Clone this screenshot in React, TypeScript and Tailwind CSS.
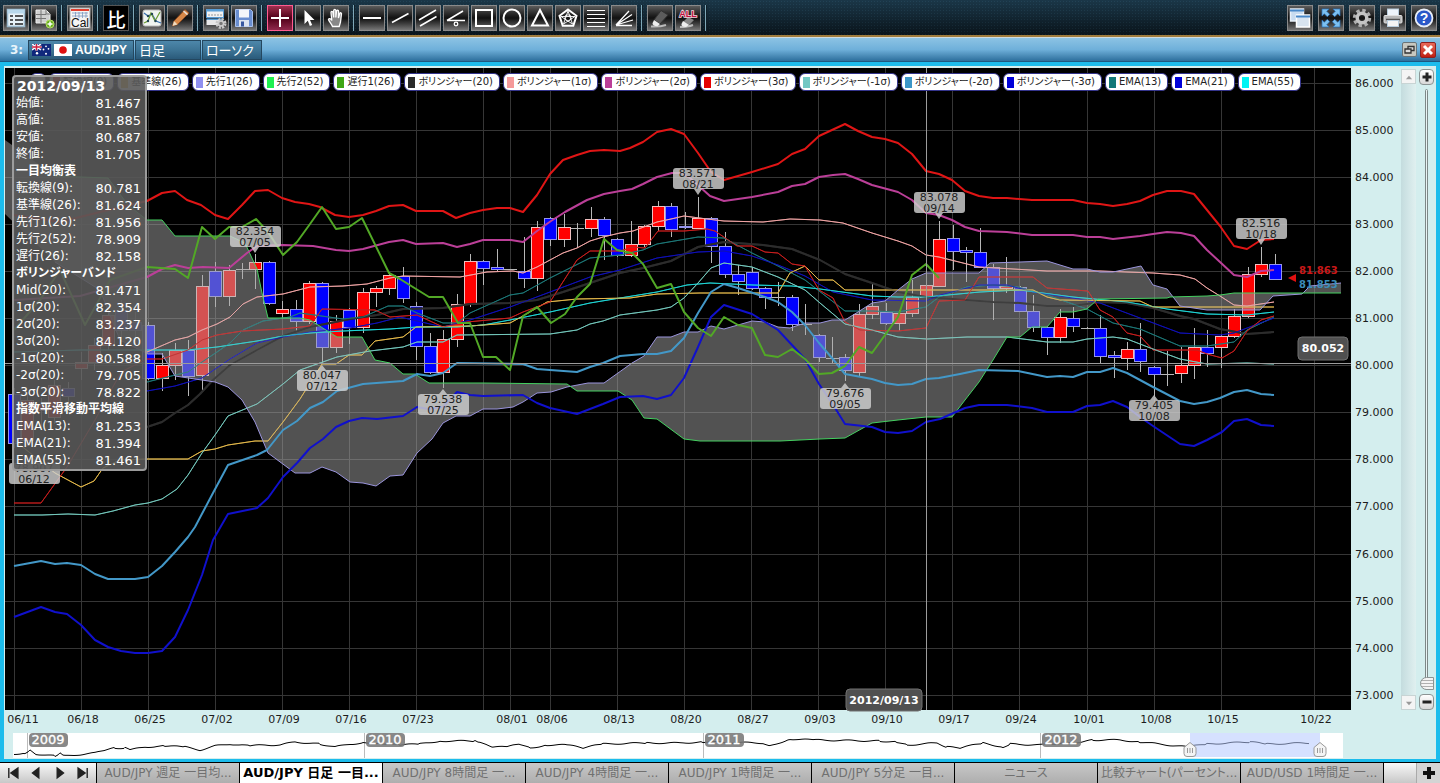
import type { ReactNode } from "react";
import clsx from "clsx";

const SANS = "font-['DejaVu_Sans','Noto_Sans_CJK_JP',sans-serif]";

type Candle = [number, number, number, number, number, "u" | "d" | "n"];

// session, high, body top, body bottom, low, direction
const CANDLES: Candle[] = [
  [0, 388, 394, 443, 448, "d"], [1, 392, 400, 440, 446, "u"], [2, 398, 404, 410, 430, "u"], [3, 380, 385, 417, 424, "u"],
  [4, 382, 388, 396, 402, "d"], [5, 352, 362, 368, 380, "u"], [6, 338, 345, 362, 370, "u"], [7, 308, 315, 345, 350, "u"],
  [8, 300, 310, 330, 342, "d"], [9, 312, 322, 330, 345, "d"], [10, 322, 325, 378, 380, "d"], [11, 353, 365, 378, 391, "u"],
  [12, 343, 350, 365, 380, "u"], [13, 340, 350, 376, 396, "d"], [14, 275, 286, 375, 390, "u"], [15, 262, 271, 296, 307, "d"],
  [16, 265, 270, 296, 306, "u"], [17, 263, 269, 269, 279, "n"], [18, 254, 262, 269, 289, "u"], [19, 261, 262, 303, 305, "d"],
  [20, 301, 309, 313, 319, "u"], [21, 300, 309, 321, 332, "d"], [22, 281, 283, 321, 324, "u"], [23, 282, 283, 347, 364, "d"],
  [24, 315, 321, 347, 353, "u"], [25, 308, 310, 327, 344, "d"], [26, 288, 292, 327, 333, "u"], [27, 286, 288, 292, 307, "u"],
  [28, 272, 275, 288, 295, "u"], [29, 267, 276, 298, 303, "d"], [30, 302, 306, 346, 360, "d"], [31, 333, 346, 372, 374, "d"],
  [32, 330, 339, 372, 388, "u"], [33, 294, 304, 339, 347, "u"], [34, 254, 261, 304, 307, "u"], [35, 260, 261, 268, 285, "d"],
  [36, 249, 267, 269, 272, "d"], [37, 269, 269, 269, 270, "n"], [38, 237, 271, 278, 288, "d"], [39, 221, 227, 278, 291, "u"],
  [40, 217, 218, 239, 246, "d"], [41, 214, 227, 239, 247, "u"], [42, 223, 228, 228, 248, "n"], [43, 207, 219, 228, 237, "u"],
  [44, 217, 219, 235, 260, "d"], [45, 238, 239, 255, 257, "d"], [46, 221, 244, 255, 257, "u"], [47, 225, 226, 244, 247, "u"],
  [48, 201, 206, 226, 231, "u"], [49, 203, 206, 229, 237, "d"], [50, 212, 226, 227, 229, "d"], [51, 197, 218, 228, 229, "u"],
  [52, 217, 218, 246, 263, "d"], [53, 232, 246, 274, 278, "d"], [54, 265, 274, 281, 295, "d"], [55, 267, 272, 288, 290, "d"],
  [56, 287, 288, 297, 309, "d"], [57, 282, 297, 297, 306, "n"], [58, 295, 297, 324, 331, "d"], [59, 304, 324, 324, 335, "n"],
  [60, 334, 335, 357, 362, "d"], [61, 337, 358, 358, 364, "n"], [62, 354, 357, 370, 381, "d"], [63, 304, 314, 372, 376, "u"],
  [64, 283, 306, 314, 319, "u"], [65, 303, 312, 323, 325, "d"], [66, 310, 313, 323, 331, "u"], [67, 280, 297, 313, 317, "u"],
  [68, 270, 285, 297, 315, "u"], [69, 221, 239, 286, 287, "u"], [70, 225, 238, 251, 270, "d"], [71, 247, 250, 252, 282, "d"],
  [72, 228, 252, 267, 268, "d"], [73, 264, 267, 288, 320, "d"], [74, 257, 286, 288, 293, "u"], [75, 286, 287, 311, 312, "d"],
  [76, 295, 311, 327, 332, "d"], [77, 326, 327, 337, 355, "d"], [78, 309, 317, 337, 343, "u"], [79, 307, 318, 326, 332, "d"],
  [80, 327, 328, 328, 329, "n"], [81, 315, 328, 356, 363, "d"], [82, 351, 355, 357, 378, "d"], [83, 342, 349, 358, 370, "u"],
  [84, 323, 349, 361, 372, "d"], [85, 366, 367, 374, 396, "d"], [86, 351, 374, 374, 386, "n"], [87, 347, 365, 373, 383, "u"],
  [88, 328, 347, 365, 379, "u"], [89, 330, 347, 353, 367, "d"], [90, 334, 336, 347, 368, "u"], [91, 309, 316, 336, 338, "u"],
  [92, 267, 274, 316, 318, "u"], [93, 247, 264, 274, 277, "u"], [94, 254, 264, 279, 280, "d"],
];

const SPAN_A =
  "5,214 55,262 100,290 120,340 148,354 162,354 175,376 215,382 228,387 242,400 255,422 268,453 295,473 310,473 322,467 336,472 350,482 363,483 376,486 390,476 403,475 417,453 432,439 443,423 456,416 470,416 483,409 497,409 513,407 523,402 537,393 551,392 567,387 588,383 604,383 618,373 632,363 644,356 657,337 671,337 684,332 698,332 711,326 724,329 752,321 765,322 778,327 790,328 805,323 820,323 832,320 845,320 858,312 872,303 885,301 898,290 912,279 926,273 979,273 990,263 1020,262 1047,261 1073,269 1087,269 1100,272 1113,272 1127,269 1141,266 1153,285 1167,289 1180,306 1207,310 1260,310 1273,296 1302,294 1310,286 1341,283";
const SPAN_B =
  "5,140 55,176 108,178 128,205 147,220 162,220 175,236 230,236 245,243 257,269 262,293 268,318 300,318 310,320 337,337 362,337 375,360 390,363 403,374 415,374 429,383 483,383 567,384 577,391 618,391 632,400 644,418 657,419 684,439 700,441 780,441 820,439 845,438 872,423 898,420 926,417 952,417 965,400 979,382 993,360 1007,337 1020,337 1032,327 1047,327 1060,312 1073,312 1087,309 1098,299 1167,298 1170,297 1207,296 1220,295 1234,293 1341,293";

const LINES: { color: string; width: number; points: string }[] = [
  { color: "#2c2c2c", width: 2, points: "147,427 162,422 175,413 188,405 200,394 213,380 230,365 257,350 283,336 310,327 350,319 377,315 403,309 443,308 470,304 510,303 537,300 563,292 590,283 620,273 643,268 671,261 698,247 724,242 763,245 792,249 820,260 845,274 872,283 898,292 926,297 940,298 993,302 1020,303 1047,306 1073,306 1100,302 1127,303 1153,308 1180,316 1194,319 1220,329 1247,334 1274,332" },
  { color: "#1c7878", width: 1, points: "147,382 167,377 188,372 202,362 217,352 230,343 243,330 263,321 290,317 300,313 343,319 363,317 388,306 403,306 417,313 443,323 457,323 470,313 510,295 523,293 550,278 590,258 620,255 643,250 657,244 698,237 724,238 752,253 778,266 805,280 845,311 872,311 898,312 926,307 939,297 967,287 993,285 1018,287 1047,295 1087,309 1113,323 1140,329 1180,346 1207,346 1234,342 1247,330 1274,317" },
  { color: "#1010b8", width: 1, points: "147,391 175,386 202,378 230,359 257,343 283,337 310,332 350,328 377,323 400,317 443,327 470,320 510,307 550,292 590,277 620,270 657,258 698,252 724,251 752,256 778,265 805,276 833,292 872,300 926,301 940,295 979,285 1007,285 1033,292 1073,298 1100,303 1140,318 1180,333 1220,335 1234,333 1247,328 1274,318" },
  { color: "#1fd6d6", width: 1, points: "14,352 80,350 147,350 188,350 217,347 257,341 283,336 310,333 343,331 390,329 417,327 457,327 483,325 510,320 550,312 590,303 620,298 657,292 687,285 710,283 753,285 792,286 820,289 872,296 898,297 926,297 980,292 1020,290 1073,297 1127,302 1167,309 1207,314 1247,315 1274,312" },
  { color: "#e3b84a", width: 1, points: "14,440 55,473 68,480 81,487 94,481 103,468 120,460 147,459 188,459 202,451 215,449 228,445 255,441 268,441 283,422 300,399 322,364 336,364 349,355 362,355 375,341 403,337 416,327 470,326 510,323 523,316 547,302 577,299 630,298 657,294 700,293 778,293 790,273 805,266 819,280 833,280 845,290 960,290 1033,290 1047,297 1060,300 1140,301 1153,307 1274,307" },
  { color: "#c81e1e", width: 1, points: "14,503 41,503 67,467 95,420 121,372 147,359 162,359 188,350 202,340 217,335 242,331 283,329 310,326 322,309 375,310 390,317 417,315 443,327 467,322 510,318 523,312 550,302 577,260 590,251 620,251 633,247 645,248 658,231 684,231 707,229 715,231 737,246 752,246 765,252 778,253 792,264 805,266 819,290 833,298 845,322 860,330 898,331 926,328 939,301 965,300 979,277 1033,277 1047,288 1088,291 1100,310 1113,317 1127,333 1140,336 1153,350 1197,350 1207,354 1222,358 1234,351 1247,331 1261,320 1274,316" },
  { color: "#f0a4a4", width: 1, points: "147,352 175,340 188,337 202,330 217,324 230,317 243,304 257,297 283,294 310,287 343,286 367,284 390,278 403,276 460,277 487,272 513,271 523,273 537,267 563,253 577,248 590,241 603,237 620,233 633,231 657,222 671,219 684,216 707,219 724,221 763,222 790,219 820,220 843,223 872,233 898,241 912,246 926,255 939,257 979,267 1047,271 1100,271 1153,273 1180,275 1195,279 1207,288 1220,296 1234,305 1247,306 1274,302" },
  { color: "#73c8bc", width: 1, points: "14,515 42,515 68,514 95,515 113,511 135,505 148,503 162,499 177,489 188,475 202,453 215,435 228,416 257,404 283,384 300,370 337,357 370,351 403,347 417,342 443,342 457,335 550,334 577,330 590,324 603,321 620,315 657,310 671,307 684,298 698,283 711,268 724,263 752,267 778,277 805,290 820,303 845,324 872,330 898,337 927,339 967,337 1007,337 1047,342 1073,342 1087,339 1113,337 1127,339 1153,349 1180,359 1207,364 1247,363 1274,364" },
  { color: "#e01515", width: 2, points: "14,215 60,222 100,212 147,201 162,193 175,191 187,200 201,205 215,215 228,219 242,205 255,191 268,190 282,198 295,202 309,204 320,207 335,215 349,217 363,215 376,211 389,206 403,205 416,211 443,211 456,218 470,213 483,210 497,208 510,208 523,212 537,195 550,174 563,160 577,155 590,151 604,150 620,151 630,148 643,142 657,132 671,129 684,134 698,153 711,172 724,180 752,172 778,164 792,154 805,149 819,136 832,130 845,124 858,131 872,137 885,139 898,143 912,154 926,171 939,174 952,180 965,191 979,196 993,198 1007,198 1032,200 1073,200 1087,203 1100,204 1113,206 1127,204 1140,201 1153,195 1167,191 1181,191 1194,194 1207,210 1220,226 1234,246 1247,249 1261,240 1274,239" },
  { color: "#bb3f98", width: 2, points: "14,300 80,296 147,277 162,269 175,265 188,268 203,267 229,268 247,253 257,246 283,245 313,246 336,250 349,251 363,249 389,242 403,240 416,244 443,243 457,247 470,244 483,240 511,240 523,242 537,231 551,221 565,212 587,200 604,194 620,191 632,189 643,184 657,177 672,173 682,173 690,178 710,196 724,201 738,199 752,197 778,192 792,186 805,184 819,177 833,175 845,174 858,179 872,185 898,192 912,200 926,213 939,215 952,220 965,227 979,231 1007,232 1032,235 1073,235 1087,237 1100,237 1113,239 1140,236 1153,234 1167,232 1181,233 1194,236 1207,250 1220,262 1234,275 1247,277 1261,271 1274,270" },
  { color: "#4398c8", width: 2, points: "14,566 41,561 55,564 67,563 81,565 95,574 108,579 135,579 148,577 162,566 175,552 188,537 195,527 213,493 228,465 257,455 267,450 283,430 297,421 310,408 323,402 337,391 363,384 403,381 417,374 430,376 443,373 457,363 523,364 537,369 550,370 577,372 590,367 603,363 620,356 643,354 657,354 671,351 684,338 698,313 711,292 724,284 738,288 765,297 778,302 792,312 805,325 819,343 832,358 845,374 872,379 885,383 898,385 912,384 926,379 939,378 960,374 979,370 1018,371 1047,377 1060,376 1073,377 1087,372 1100,372 1113,368 1127,373 1153,387 1180,401 1194,404 1207,402 1220,398 1234,392 1247,390 1261,394 1274,395" },
  { color: "#1010cc", width: 2, points: "14,617 41,607 55,612 67,614 81,625 95,640 108,647 121,651 135,653 148,653 162,651 175,637 188,610 202,575 213,540 228,514 257,508 268,498 283,477 297,463 310,448 323,439 336,427 349,421 362,418 377,419 403,416 417,407 428,409 443,407 457,392 470,395 483,396 523,395 537,403 550,408 577,414 590,409 603,404 620,397 643,396 657,399 671,395 684,378 698,347 711,317 724,305 752,314 778,330 792,345 805,359 819,384 832,403 845,424 872,427 885,432 898,433 912,431 926,422 940,419 965,408 979,405 1007,405 1032,408 1047,412 1073,412 1087,406 1100,405 1113,401 1127,407 1140,417 1153,426 1180,444 1194,446 1207,440 1222,432 1234,421 1247,419 1261,425 1274,426" },
  { color: "#52a826", width: 2, points: "14,330 40,300 60,270 85,325 110,280 147,267 175,269 188,278 202,227 215,239 229,227 242,227 256,219 268,232 283,255 297,242 310,224 322,207 336,229 349,227 362,218 389,273 400,279 429,297 443,297 458,323 470,323 483,357 496,357 510,370 523,316 537,307 551,323 565,314 577,297 590,284 604,239 617,250 632,253 643,264 657,288 671,284 684,312 698,328 711,336 724,317 738,325 752,328 765,355 778,357 792,349 805,359 819,374 832,373 845,366 859,347 872,353 885,335 898,317 912,275 926,264 939,278" },
];

const PRICES = [86, 85, 84, 83, 82, 81, 80, 79, 78, 77, 76, 75, 74, 73];

const DATES: [string, number, number][] = [
  ["06/11", 14, 23], ["06/18", 81, 83], ["06/25", 148, 150], ["07/02", 215, 217], ["07/09", 282, 284],
  ["07/16", 349, 351], ["07/23", 416, 418], ["08/01", 510, 512], ["08/06", 550, 552], ["08/13", 617, 619],
  ["08/20", 684, 686], ["08/27", 751, 753], ["09/03", 818, 820], ["09/10", 885, 887], ["09/17", 952, 954],
  ["09/24", 1019, 1021], ["10/01", 1087, 1089], ["10/08", 1154, 1156], ["10/15", 1221, 1223], ["10/22", 1314, 1316],
];

// price, date, centre x, box top, pointer side
const CALLOUTS: [string, string, number, number, "up" | "down"][] = [
  ["78.907", "06/12", 34, 463, "up"],
  ["82.354", "07/05", 255, 226, "down"],
  ["80.047", "07/12", 322, 370, "up"],
  ["79.538", "07/25", 443, 394, "up"],
  ["83.571", "08/21", 698, 168, "down"],
  ["79.676", "09/05", 845, 388, "up"],
  ["83.078", "09/14", 939, 192, "down"],
  ["79.405", "10/08", 1154, 400, "up"],
  ["82.516", "10/18", 1261, 218, "down"],
];

const LEGEND: [string, string][] = [
  ["#e01515", "転換線(9)"],
  ["#e3b84a", "基準線(26)"],
  ["#9090f0", "先行1(26)"],
  ["#20f050", "先行2(52)"],
  ["#3fa614", "遅行1(26)"],
  ["#2a2a2a", "ボリンジャー(20)"],
  ["#f59a9a", "ボリンジャー(1σ)"],
  ["#bb3f98", "ボリンジャー(2σ)"],
  ["#e60000", "ボリンジャー(3σ)"],
  ["#73c8c4", "ボリンジャー(-1σ)"],
  ["#3c96c8", "ボリンジャー(-2σ)"],
  ["#0000d8", "ボリンジャー(-3σ)"],
  ["#127878", "EMA(13)"],
  ["#0000d8", "EMA(21)"],
  ["#00f4f4", "EMA(55)"],
];

const READOUT: [string, string?][] = [
  ["始値:", "81.467"], ["高値:", "81.885"], ["安値:", "80.687"], ["終値:", "81.705"],
  ["一目均衡表"],
  ["転換線(9):", "80.781"], ["基準線(26):", "81.624"], ["先行1(26):", "81.956"], ["先行2(52):", "78.909"], ["遅行(26):", "82.158"],
  ["ボリンジャーバンド"],
  ["Mid(20):", "81.471"], ["1σ(20):", "82.354"], ["2σ(20):", "83.237"], ["3σ(20):", "84.120"],
  ["-1σ(20):", "80.588"], ["-2σ(20):", "79.705"], ["-3σ(20):", "78.822"],
  ["指数平滑移動平均線"],
  ["EMA(13):", "81.253"], ["EMA(21):", "81.394"], ["EMA(55):", "81.461"],
];

const TABS = [
  "AUD/JPY 週足 一目均...",
  "AUD/JPY 日足 一目...",
  "AUD/JPY 8時間足 一...",
  "AUD/JPY 4時間足 一...",
  "AUD/JPY 1時間足 一...",
  "AUD/JPY 5分足 一目...",
  "ニュース",
  "比較チャート(パーセント...",
  "AUD/USD 1時間足 一...",
];

const OVERVIEW: [number, number][] = [
  [14, 754], [25, 753], [30, 750], [36, 754], [55, 756], [60, 753], [65, 756], [95, 753], [105, 750], [115, 748], [125, 748],
  [130, 750], [145, 747], [165, 746], [185, 747], [200, 750], [215, 746], [230, 744], [250, 746], [265, 745], [280, 745],
  [295, 742], [320, 744], [335, 747], [350, 744], [363, 743], [380, 743], [400, 745], [420, 744], [440, 741], [475, 741],
  [480, 743], [493, 747], [507, 747], [520, 744], [530, 748], [547, 745], [567, 745], [583, 748], [603, 744], [647, 743],
  [680, 743], [703, 742], [763, 743], [770, 746], [790, 739], [813, 740], [880, 741], [897, 742], [907, 745], [937, 743],
  [947, 747], [960, 748], [983, 743], [1003, 747], [1010, 744], [1040, 745], [1062, 743], [1080, 742], [1093, 740], [1120, 740],
  [1140, 742], [1187, 747], [1207, 744], [1250, 742], [1267, 744], [1310, 743],
];

const YEARS: [string, number][] = [["2009", 27], ["2010", 364], ["2011", 703], ["2012", 1040]];

function priceY(price: number) {
  return Math.round(83 + (86 - price) * 47.05);
}

function candleX(index: number) {
  return Math.floor(14.5 + index * 13.41);
}

// Adds small ticks between the anchor points so that the line looks like closing prices
function overviewPoints() {
  const out: string[] = [];
  for (let i = 0; i < OVERVIEW.length - 1; i++) {
    const [x1, y1] = OVERVIEW[i];
    const [x2, y2] = OVERVIEW[i + 1];
    for (let x = x1; x < x2; x += 3) {
      const y = y1 + ((y2 - y1) * (x - x1)) / (x2 - x1) + Math.sin(x * 2.3) * 0.7;
      out.push(`${x},${y.toFixed(1)}`);
    }
  }
  return out.join(" ");
}

function Icon({ children }: { children: ReactNode }) {
  return (
    <svg viewBox="0 0 24 24" className="w-6 h-6" fill="none" stroke="#fff" strokeWidth="1.6" aria-hidden="true">
      {children}
    </svg>
  );
}

function ToolButton({ label, active, children }: { label: string; active?: boolean; children: ReactNode }) {
  return (
    <button
      type="button"
      aria-label={label}
      className={clsx(
        "w-[26px] h-[26px] shrink-0 flex items-center justify-center border overflow-hidden",
        active
          ? "border-[#ff5c90] bg-linear-to-b from-[#a03050] via-[#500018] to-[#90284c]"
          : "border-[#8a8a8a] bg-linear-to-b from-[#5c5c5c] via-[#111111] to-[#777777]"
      )}
    >
      {children}
    </button>
  );
}

function Separator() {
  return <div className="w-0.5 h-[26px] mx-0.5 bg-[#7fa8b8] border-r border-[#10202a] shrink-0" />;
}

function Toolbar() {
  return (
    <header className="flex items-center justify-between px-[3px] pt-[5px] pb-1 border-b-2 border-[#a07c3c] bg-[#122531] bg-[linear-gradient(#1f4054b0,#060d12b0),radial-gradient(#2a4c5e_1px,#10222d_1px)] [background-size:100%_100%,3px_3px]">
      <div className="flex items-center gap-0.5">
        <ToolButton label="一覧">
          <Icon>
            <rect x="3.5" y="3.5" width="17" height="17" fill="#e8f2f8" stroke="#9ab8cc" />
            <rect x="3.5" y="3.5" width="17" height="4" fill="#b8d8ec" stroke="none" />
            <path d="M6 10h3M6 14h3M6 18h3M11 10h8M11 14h8M11 18h8" stroke="#222" strokeWidth="1.6" />
          </Icon>
        </ToolButton>
        <ToolButton label="追加">
          <Icon>
            <path d="M4 4h10l4 4v9H4z" fill="#d0d0d0" stroke="#eee" strokeWidth="1" />
            <path d="M4 8.500h10M4 12.500h10M9 4v13" stroke="#777" strokeWidth="1" />
            <path d="M14 4v4h4" stroke="#777" strokeWidth="1" />
            <circle cx="18" cy="18" r="4" fill="#6ab020" stroke="#b0dc60" strokeWidth="1" />
            <path d="M15.500 18h5M18 15.500v5" stroke="#fff" strokeWidth="1.500" />
          </Icon>
        </ToolButton>
        <Separator />
        <ToolButton label="カレンダー">
          <Icon>
            <rect x="2" y="2" width="20" height="20" fill="#f4f4f4" stroke="#aaa" strokeWidth="1" />
            <path d="M3 4h18" stroke="#e04030" strokeWidth="2" />
            <path d="M4 7h16M4 10h16M7.500 6v6M11 6v6M14.500 6v6M18 6v6" stroke="#7898c0" strokeWidth=".8" />
            <text x="12" y="21" textAnchor="middle" fontSize="12" fontFamily="Liberation Sans, sans-serif" fill="#111" stroke="#f4f4f4" strokeWidth="1.500" paintOrder="stroke">
              Cal
            </text>
          </Icon>
        </ToolButton>
        <Separator />
        <button
          type="button"
          className="w-[26px] h-[26px] shrink-0 flex items-center justify-center bg-black border border-[#555] text-white text-[19px] leading-none font-medium font-['Noto_Sans_CJK_JP',sans-serif]"
        >
          比
        </button>
        <Separator />
        <ToolButton label="テクニカル">
          <Icon>
            <rect x="3" y="4" width="18" height="16" rx="2" fill="#f0f4f0" stroke="#bbb" strokeWidth="1" />
            <path d="M4 7l4 3 4-2 4 7 5 2" stroke="#3a70b0" strokeWidth="1.200" />
            <path d="M4 17l4-2 3-8 4 8 5-9" stroke="#6a9a30" strokeWidth="1.200" />
            <g fill="#245" stroke="none">
              <circle cx="8" cy="10" r="1.200" />
              <circle cx="12" cy="8" r="1.200" />
              <circle cx="15.500" cy="15" r="1.200" />
              <circle cx="8" cy="15" r="1.200" />
            </g>
          </Icon>
        </ToolButton>
        <ToolButton label="描画">
          <Icon>
            <path d="M4.500 20l1.500-5L17 3.500 21 7 9.500 18.500z" fill="#d88848" stroke="#8a4a20" strokeWidth="1" />
            <path d="M4.500 20l1.500-5 3.500 3.500z" fill="#f0dcc0" stroke="none" />
            <path d="M15.500 5L19.500 8.600" stroke="#e8e0d8" strokeWidth="1.500" />
          </Icon>
        </ToolButton>
        <Separator />
        <ToolButton label="画面設定">
          <Icon>
            <rect x="2.500" y="3.500" width="17" height="8" fill="#f2f2f2" stroke="#5a9ad0" strokeWidth="1" />
            <path d="M2.500 4.500h17M2.500 13.500h17" stroke="#5aa0d8" strokeWidth="2" />
            <rect x="2.500" y="14" width="13" height="5" fill="#e8e8e8" stroke="none" />
            <path d="M4 9h14" stroke="#999" strokeDasharray="2 1" strokeWidth="1" />
            <circle cx="17" cy="17.500" r="4" stroke="#c8c8c8" strokeWidth="3" strokeDasharray="2 1.150" />
            <circle cx="17" cy="17.500" r="2.500" fill="#777" stroke="#ccc" strokeWidth="1.500" />
          </Icon>
        </ToolButton>
        <ToolButton label="保存">
          <Icon>
            <path d="M3.500 3.500h15l2 2v15h-17z" fill="#6a8ed0" stroke="#a8c0ec" strokeWidth="1" />
            <rect x="7" y="3.500" width="10" height="8" fill="#f4f6fa" stroke="none" />
            <rect x="7" y="14" width="10" height="6.500" fill="#dde4f0" stroke="none" />
            <rect x="9" y="15.500" width="3" height="5" fill="#3858a0" stroke="none" />
          </Icon>
        </ToolButton>
        <Separator />
        <ToolButton label="十字カーソル" active>
          <Icon>
            <path d="M12 3v18M3 12h18" strokeWidth="2" />
          </Icon>
        </ToolButton>
        <ToolButton label="選択">
          <Icon>
            <path d="M8.500 4v14l3.300-3.200 2 5.200 2.400-1-2.200-5h4.500z" fill="#fff" stroke="none" />
          </Icon>
        </ToolButton>
        <ToolButton label="移動">
          <Icon>
            <path d="M8.500 20.500c-1-2.500-3.500-5-4-7 .5-1.500 2-1 3.300 1L7 6.500c0-1.500 1.600-1.500 2 0l.7 5V4.500c.2-1.500 1.900-1.500 2.100 0v7l.8-6.500c.3-1.400 1.900-1.200 2 .2l-.2 6.800 1.400-4.500c.5-1.200 1.900-.8 1.700.5-.5 3-.5 5-1 8l-1.300 4.500z" fill="#888" strokeWidth="1.300" />
          </Icon>
        </ToolButton>
        <Separator />
        <ToolButton label="水平線">
          <Icon><path d="M3 12h18" strokeWidth="2" /></Icon>
        </ToolButton>
        <ToolButton label="トレンドライン">
          <Icon><path d="M4 16.500L20.500 7.500" /></Icon>
        </ToolButton>
        <ToolButton label="平行線">
          <Icon><path d="M3 14L20 4M4 20l16.500-9.500" /></Icon>
        </ToolButton>
        <ToolButton label="角度線">
          <Icon>
            <path d="M3 14.500L19 5M3 14.500h18" />
            <circle cx="12" cy="18" r="1.800" strokeWidth="1.300" />
          </Icon>
        </ToolButton>
        <ToolButton label="四角形">
          <Icon><rect x="4" y="4" width="16" height="16" strokeWidth="2" /></Icon>
        </ToolButton>
        <ToolButton label="円">
          <Icon><circle cx="12" cy="12" r="8.500" strokeWidth="2" /></Icon>
        </ToolButton>
        <ToolButton label="三角形">
          <Icon><path d="M12 4l8 15.500H4z" strokeWidth="2" /></Icon>
        </ToolButton>
        <ToolButton label="五角形">
          <Icon>
            <path d="M12 3.500l8.500 6.300-3.200 10H6.700l-3.200-10z" strokeWidth="2" />
            <path d="M12 5l4.500 13L5 10.500h14L7.500 18z" strokeWidth=".9" />
            <path d="M12 15.500l-3.400-2.500 1.300-4h4.200l1.300 4z" strokeWidth=".9" />
          </Icon>
        </ToolButton>
        <ToolButton label="リトレースメント">
          <Icon><path d="M3 4.500h18M3 8.500h18M3 12.500h18M3 16.500h18M3 20.500h18" strokeWidth="1.200" /></Icon>
        </ToolButton>
        <ToolButton label="ファン">
          <Icon><path d="M4 19L17 5M4 19L20 8.500M4 19l17-5M4 19.500h16" strokeWidth="1.300" /></Icon>
        </ToolButton>
        <Separator />
        <ToolButton label="消去">
          <Icon>
            <path d="M3 20.500q9 .5 15-1.500" stroke="#bbb" strokeWidth="2" />
            <path d="M6 14l7-9.500 7 4.500-8 9z" fill="#5c5c5c" stroke="#333" strokeWidth="1" />
            <path d="M6 14l6 4-2.500 2.300q-5 0-5-3z" fill="#eee" stroke="none" />
          </Icon>
        </ToolButton>
        <ToolButton label="すべて消去">
          <Icon>
            <path d="M4 21q8 0 13-2" stroke="#bbb" strokeWidth="2" />
            <path d="M7 16l5-5 6 3-6 6z" fill="#888" stroke="none" />
            <path d="M7 15l6 4-3 2q-5 0-4.500-3z" fill="#eee" stroke="none" />
            <text x="12" y="11" textAnchor="middle" fontSize="9" fontWeight="bold" fontFamily="Liberation Sans, sans-serif" fill="#c01040" stroke="#f4d8e0" strokeWidth="1.500" paintOrder="stroke">
              ALL
            </text>
          </Icon>
        </ToolButton>
        <Separator />
      </div>
      <div className="flex items-center gap-[5px]">
        <ToolButton label="ウィンドウ整列">
          <Icon>
            <rect x="2.500" y="3" width="13" height="12" fill="#c8dcf0" stroke="#e8f0f8" strokeWidth="1.500" />
            <path d="M2 4.500h14" stroke="#4888c8" strokeWidth="2" />
            <rect x="8.500" y="9" width="13" height="12" fill="#d8e4f0" stroke="#fff" strokeWidth="1.500" />
            <path d="M8 10.500h14" stroke="#4888c8" strokeWidth="2" />
          </Icon>
        </ToolButton>
        <ToolButton label="全画面">
          <Icon>
            <g fill="#7cc0f0" stroke="#2a70b8" strokeWidth=".7">
              <path d="M3 3h7l-2.300 2.300 3 3-2.400 2.400-3-3L3 10z" />
              <path d="M21 3h-7l2.300 2.300-3 3 2.400 2.400 3-3L21 10z" />
              <path d="M3 21h7l-2.300-2.300 3-3-2.400-2.400-3 3L3 14z" />
              <path d="M21 21h-7l2.300-2.300-3-3 2.400-2.400 3 3L21 14z" />
            </g>
          </Icon>
        </ToolButton>
        <ToolButton label="設定">
          <Icon>
            <circle cx="12" cy="12" r="7.700" stroke="#b0b0b0" strokeWidth="3" strokeDasharray="3.400 2.650" />
            <circle cx="12" cy="12" r="4.800" stroke="#c4c4c4" strokeWidth="3.500" />
          </Icon>
        </ToolButton>
        <ToolButton label="印刷">
          <Icon>
            <rect x="6.500" y="3" width="11" height="7" fill="#eef4fa" stroke="#b8ccdc" strokeWidth="1" />
            <rect x="3" y="9.500" width="18" height="7.500" rx="1" fill="#b8b8b8" stroke="#e0e0e0" strokeWidth="1" />
            <path d="M5 13.500h14" stroke="#555" strokeWidth="1.500" />
            <rect x="6.500" y="14.500" width="11" height="6" fill="#f4f4f4" stroke="#b8ccdc" strokeWidth="1" />
          </Icon>
        </ToolButton>
        <ToolButton label="ヘルプ">
          <Icon>
            <circle cx="12" cy="12" r="8.500" fill="#2a58c8" stroke="#e8eef8" strokeWidth="1.800" />
            <text x="12" y="17" textAnchor="middle" fontSize="14" fontWeight="bold" fontFamily="Liberation Sans, sans-serif" fill="#fff" stroke="none">
              ?
            </text>
          </Icon>
        </ToolButton>
      </div>
    </header>
  );
}

function TitleBar() {
  const box =
    "h-5 px-[3px] flex items-center border border-[#24475f] bg-linear-to-b from-[#4d87aa] via-[#3d7495] to-[#2a5a7a] text-white text-[13px] leading-none";
  return (
    <div className="h-[25px] flex items-center justify-between pl-2.5 pr-1 border-t border-[#cfdbe0] border-b border-b-[#1d5880] bg-linear-to-b from-[#8cc3e4] via-[#6fb0da] to-[#2c6f9c]">
      <div className="flex items-center">
        <span className={clsx("w-[18px] text-[12px] font-bold text-[#e8f4fa]", SANS)}>3:</span>
        <button type="button" className={clsx(box, "w-[106px] gap-[3px]")}>
          <svg viewBox="0 0 19 12" className="w-[19px] h-3 shrink-0" aria-hidden="true">
            <rect width="19" height="12" fill="#10287c" />
            <path d="M0 0l9 6M9 0L0 6" stroke="#fff" strokeWidth="1.500" />
            <path d="M4.500 0v6.500M0 3h9.500" stroke="#fff" strokeWidth="2.600" />
            <path d="M4.500 0v6.500M0 3h9.500" stroke="#d02040" strokeWidth="1.400" />
            <g fill="#fff">
              <circle cx="5" cy="9.300" r="1.200" />
              <circle cx="14" cy="2.300" r=".9" />
              <circle cx="11.500" cy="5.500" r=".9" />
              <circle cx="16.500" cy="4.800" r=".9" />
              <circle cx="14" cy="9.800" r="1" />
            </g>
          </svg>
          <svg viewBox="0 0 18 12" className="w-[18px] h-3 shrink-0" aria-hidden="true">
            <rect width="18" height="12" fill="#fff" />
            <circle cx="9" cy="6" r="3.800" fill="#e01010" />
          </svg>
          <span className="font-bold text-[12px] font-['Liberation_Sans',sans-serif]">AUD/JPY</span>
        </button>
        <button type="button" className={clsx(box, "w-[66px] ml-px font-['Noto_Sans_CJK_JP',sans-serif]")}>日足</button>
        <button type="button" className={clsx(box, "w-[60px] ml-px font-['Noto_Sans_CJK_JP',sans-serif] [font-feature-settings:'palt']")}>ローソク</button>
      </div>
      <div className="flex items-center gap-[3px]">
        <button type="button" aria-label="元に戻す" className="w-[15px] h-[15px] border border-[#6a7478] rounded-xs bg-[#c8c8c0]">
          <svg viewBox="0 0 13 13" fill="#ddd" stroke="#333" strokeWidth="1.300" aria-hidden="true">
            <path d="M5 3.500h6v4H5z" />
            <path d="M2 6h6v4H2z" />
          </svg>
        </button>
        <button type="button" aria-label="閉じる" className="w-4 h-4 border border-[#8c2020] rounded-xs bg-linear-to-b from-[#e86858] to-[#c01c10]">
          <svg viewBox="0 0 14 14" stroke="#fff" strokeWidth="3" aria-hidden="true">
            <path d="M3 3l8 8M11 3l-8 8" />
          </svg>
        </button>
      </div>
    </div>
  );
}

function Callout({ price, date, x, y, side }: { price: string; date: string; x: number; y: number; side: "up" | "down" }) {
  const pointer = side === "down" ? `${x - 4},${y + 21} ${x + 4},${y + 21} ${x},${y + 27}` : `${x - 4},${y} ${x + 4},${y} ${x},${y - 5}`;
  return (
    <g>
      <g fill="#d0d0d0" opacity=".82">
        <rect x={x - 25} y={y} width="51" height="21" rx="3" />
        <polygon points={pointer} />
      </g>
      <g fontSize="11" fill="#222" textAnchor="middle">
        <text x={x} y={y + 9}>{price}</text>
        <text x={x} y={y + 20}>{date}</text>
      </g>
    </g>
  );
}

function PriceChart() {
  const reversedB = SPAN_B.split(" ").reverse().join(" ");
  return (
    <svg viewBox="5 68 1396 665" className="block w-full h-auto" fontFamily="DejaVu Sans, sans-serif" role="img" aria-label="AUD/JPY 日足">
      <defs>
        <clipPath id="plot">
          <rect x="5" y="68" width="1346" height="642" />
        </clipPath>
      </defs>
      <rect x="5" y="68" width="1346" height="642" fill="#000" />

      <g fill="#363636">
        {PRICES.map((p) => (
          <rect key={p} x="5" y={priceY(p)} width="1346" height="1" />
        ))}
        {DATES.map(([label, x]) => (
          <rect key={label} x={x} y="68" width="1" height="642" />
        ))}
        <rect x="483" y="68" width="1" height="642" />
      </g>

      <g shapeRendering="crispEdges">
        {CANDLES.map(([i, high, top, bottom, low, dir]) => {
          const x = candleX(i);
          return (
            <g key={i}>
              <rect x={x} y={high} width="1" height={low - high} fill="#b8b8b8" />
              {dir === "n" ? (
                <rect x={x - 6} y={top} width="13" height="1" fill="#b8b8b8" />
              ) : (
                <>
                  <rect x={x - 6} y={top} width="13" height={Math.max(bottom - top + 1, 2)} fill={dir === "u" ? "#f0c0c0" : "#9494ec"} />
                  <rect x={x - 5} y={top + 1} width="11" height={Math.max(bottom - top - 1, 0)} fill={dir === "u" ? "#ff0000" : "#0000ff"} />
                </>
              )}
            </g>
          );
        })}
      </g>

      <g clipPath="url(#plot)" fill="none" strokeLinejoin="round">
        {LINES.slice(0, 8).map((line) => (
          <polyline key={line.color} points={line.points} stroke={line.color} strokeWidth={line.width} />
        ))}
        <polygon points={`${SPAN_A} ${reversedB}`} fill="#a8a8a8" fillOpacity=".49" fillRule="evenodd" />
        {LINES.slice(0, 8).map((line) => (
          <polyline key={line.color} points={line.points} stroke={line.color} strokeWidth={line.width} strokeOpacity=".7" />
        ))}
        <polyline points={SPAN_A.split(" ").slice(1).join(" ")} stroke="#9a94dc" strokeWidth="1" />
        <polyline points={SPAN_B.split(" ").slice(1).join(" ")} stroke="#44d060" strokeWidth="1" />
        {LINES.slice(8).map((line) => (
          <polyline key={line.color} points={line.points} stroke={line.color} strokeWidth={line.width} />
        ))}
      </g>

      {CALLOUTS.map(([price, date, x, y, side]) => (
        <Callout key={date} price={price} date={date} x={x} y={y} side={side} />
      ))}

      {/* Crosshair */}
      <rect x="5" y="363" width="1346" height="1" fill="#9c9c9c" />
      <rect x="926" y="68" width="1" height="642" fill="#9c9c9c" />
      <rect x="1298" y="337" width="50" height="23" rx="4" fill="#505050" stroke="#707070" />
      <rect x="846" y="689" width="76" height="22" rx="4" fill="#505050" stroke="#707070" />
      <g fontSize="11" fontWeight="bold" fill="#fff" textAnchor="middle">
        <text x="1323" y="352">80.052</text>
        <text x="884" y="704">2012/09/13</text>
      </g>

      {/* Ask and bid */}
      <polygon points="1288,278 1296,274 1296,282" fill="#e01010" />
      <g fontSize="10" fontWeight="bold">
        <text x="1299" y="288" fill="#3c8cb8">81.853</text>
        <text x="1299" y="274" fill="#c81818">81.863</text>
      </g>

      <g fontSize="11" fill="#1c1c1c">
        {PRICES.map((p) => (
          <text key={p} x="1355" y={priceY(p) + 4}>{`${p}.000`}</text>
        ))}
        {DATES.map(([label, , x]) => (
          <text key={label} x={x} y="723" textAnchor="middle">{label}</text>
        ))}
      </g>
    </svg>
  );
}

function Legend() {
  return (
    <div className={clsx("absolute top-[5px] left-[25px] flex gap-[3px] text-[10px] leading-none text-[#222] whitespace-nowrap [font-feature-settings:'palt']", SANS)}>
      <span className="w-4 h-[18px] rounded-md border border-[#34348c] bg-white" />
      {LEGEND.map(([color, label]) => (
        <span key={label} className="h-[18px] pl-[3px] pr-1.5 flex items-center gap-[3px] rounded-md border border-[#34348c] bg-white">
          <i className="w-[7px] h-[11px]" style={{ backgroundColor: color }} />
          {label}
        </span>
      ))}
    </div>
  );
}

function Readout() {
  return (
    <table className={clsx("absolute top-[7px] left-[7px] w-[135px] border-2 border-[#a8a8a8]/85 border-separate border-spacing-0 rounded bg-[#595959]/90 text-white text-[12px] [font-feature-settings:'palt']", SANS)}>
      <tbody>
        <tr className="h-[18px]">
          <th colSpan={2} className="p-0 pl-[3px] text-left text-[14px] leading-[18px] font-bold">2012/09/13</th>
        </tr>
        {READOUT.map(([label, value]) => (
          <tr key={label} className="h-[17px] leading-[17px] whitespace-nowrap">
            {value ? (
              <>
                <th className="p-0 pl-0.5 text-left font-normal">{label}</th>
                <td className="p-0 pr-1 text-right text-[13px]">{value}</td>
              </>
            ) : (
              <th colSpan={2} className="p-0 pl-0.5 text-left font-bold">{label}</th>
            )}
          </tr>
        ))}
      </tbody>
    </table>
  );
}

function ZoomRail() {
  const button = "w-[15px] h-4 flex items-center justify-center rounded-sm border border-[#8c9494] bg-linear-to-b from-white to-[#d8d8d8]";
  const arrow = "w-[15px] h-[15px] flex items-center justify-center border border-[#c8d4d4] bg-[#f4f4f4]";
  return (
    <div className="w-[34px] shrink-0 flex gap-[3px] pb-[23px] pt-px">
      <div className="flex flex-col w-[15px] bg-linear-to-r from-[#c4dcde] to-[#e0f0f0]">
        <button type="button" aria-label="上へ" className={arrow}>
          <svg viewBox="0 0 9 9" className="w-2 h-2" aria-hidden="true"><path d="M1 7l3.500-4L8 7z" fill="#999" /></svg>
        </button>
        <div className="flex-1" />
        <button type="button" aria-label="下へ" className={arrow}>
          <svg viewBox="0 0 9 9" className="w-2 h-2" aria-hidden="true"><path d="M1 3l3.500 4L8 3z" fill="#999" /></svg>
        </button>
      </div>
      <div className="flex flex-col items-center gap-1 w-[15px]">
        <button type="button" aria-label="拡大" className={button}>
          <svg viewBox="0 0 10 10" className="w-2.5 h-2.5" stroke="#222" strokeWidth="3" aria-hidden="true"><path d="M5 .5v9M.5 5h9" /></svg>
        </button>
        <div className="relative flex-1 w-[15px] flex justify-center">
          <div className="w-[3px] h-full border border-[#7c8888] rounded-full bg-[#e8f4f4]" />
          <input
            type="range"
            aria-label="縮尺"
            defaultValue={100}
            className="absolute inset-0 w-[15px] h-full appearance-none bg-transparent [writing-mode:vertical-lr] [&::-webkit-slider-thumb]:appearance-none [&::-webkit-slider-thumb]:w-[14px] [&::-webkit-slider-thumb]:h-[13px] [&::-webkit-slider-thumb]:rounded-l-full [&::-webkit-slider-thumb]:rounded-r-sm [&::-webkit-slider-thumb]:border [&::-webkit-slider-thumb]:border-[#8c9494] [&::-webkit-slider-thumb]:bg-[repeating-linear-gradient(0deg,#f4f4f4_0px,#f4f4f4_2px,#b0b0b0_2px,#b0b0b0_3px)]"
          />
        </div>
        <button type="button" aria-label="縮小" className={button}>
          <svg viewBox="0 0 10 10" className="w-2.5 h-2.5" stroke="#222" strokeWidth="3" aria-hidden="true"><path d="M.5 5h9" /></svg>
        </button>
      </div>
    </div>
  );
}

function Overview() {
  return (
    <div className="pl-2 pr-[92px]">
      <svg viewBox="13 733 1330 25" className="block w-full h-auto bg-white" fontFamily="DejaVu Sans, sans-serif" role="img" aria-label="表示期間">
        {YEARS.map(([year, x]) => (
          <rect key={year} x={x} y="733" width="1" height="25" fill="#bbb" />
        ))}
        <polyline points={overviewPoints()} fill="none" stroke="#000" strokeWidth="1" />
        <rect x="1190" y="733" width="130" height="24" fill="#b4c8ff" fillOpacity=".55" />
        {YEARS.map(([year, x]) => (
          <g key={year}>
            <rect x={x + 2} y="733" width="39" height="14" rx="4" fill="#777" fillOpacity=".88" />
            <text x={x + 21} y="744" textAnchor="middle" fontSize="13" fill="#fff" stroke="#fff" strokeWidth=".3">{year}</text>
          </g>
        ))}
        {[1190, 1320].map((x) => (
          <g key={x} stroke="#999" strokeWidth="1">
            <path d={`M${x} 742.500l6 5v6q0 3-3 3h-6q-3 0-3-3v-6z`} fill="#f4f4f4" />
            <path d={`M${x - 2.5} 748v5M${x} 748v5M${x + 2.5} 748v5`} />
          </g>
        ))}
      </svg>
    </div>
  );
}

function TabBar() {
  const nav = [
    ["最初", "M4 3v14M17 3L7 10l10 7z"],
    ["前へ", "M14 3L5 10l9 7z"],
    ["次へ", "M6 3l9 7-9 7z"],
    ["最後", "M16 3v14M3 3l10 7-10 7z"],
  ];
  return (
    <nav className={clsx("h-[21px] flex border-t border-black bg-linear-to-b from-[#f8f8f8] to-[#c8c8c8] text-[12px] overflow-hidden", SANS)}>
      <div className="w-24 shrink-0 flex items-center justify-between pl-1.5 pr-1.5">
        {nav.map(([label, d]) => (
          <button key={label} type="button" aria-label={label} className="w-3.5 h-3.5">
            <svg viewBox="0 0 20 20" fill="#222" stroke="#222" strokeWidth="2" aria-hidden="true"><path d={d} /></svg>
          </button>
        ))}
      </div>
      {TABS.map((tab, i) => (
        <button
          key={tab}
          type="button"
          className={clsx(
            "w-[143px] min-w-0 px-[3px] whitespace-nowrap overflow-hidden leading-5 border-l border-black [font-feature-settings:'palt']",
            i === 1 ? "bg-white text-black font-bold text-[13px]" : "bg-linear-to-b from-[#c8c8c8] to-[#aeaeae] text-[#707070]"
          )}
        >
          {tab}
        </button>
      ))}
      <div className="flex-1 border-l border-black" />
      <button type="button" aria-label="タブを追加" className="w-6 flex items-center justify-center border-l border-[#aaa] bg-[#d4d4d4]">
        <svg viewBox="0 0 12 12" className="w-3 h-3" stroke="#111" strokeWidth="4" aria-hidden="true"><path d="M6 0v12M0 6h12" /></svg>
      </button>
    </nav>
  );
}

export default function App() {
  return (
    <div className="w-full overflow-hidden bg-[#14242e]">
      <Toolbar />
      <TitleBar />
      <main className="border-4 border-b-3 border-[#1cbcec] bg-[#d4eeee]">
        <div className="px-px pt-0.5 pb-px">
          <div className="flex">
            <div className="relative flex-1 min-w-0">
              <PriceChart />
              <Legend />
              <Readout />
            </div>
            <ZoomRail />
          </div>
          <Overview />
        </div>
      </main>
      <TabBar />
    </div>
  );
}
